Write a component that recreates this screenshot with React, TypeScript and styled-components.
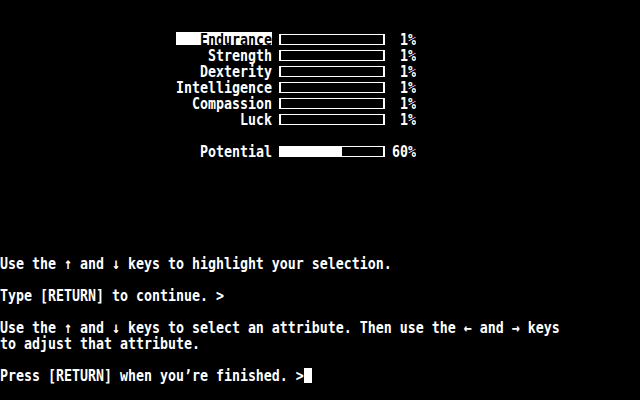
import React from "react";
import styled, { createGlobalStyle } from "styled-components";

const Global = createGlobalStyle`
  html, body {
    margin: 0;
    padding: 0;
    background: #000;
  }
`;

const Screen = styled.div`
  width: 640px;
  height: 400px;
  overflow: hidden;
  background: #000;
  color: #fff;
  font-family: "DejaVu Sans Mono", "Liberation Mono", monospace;
  font-weight: bold;
  font-size: 13.29px;
  line-height: 16px;
  display: flex;
  flex-direction: column;
`;

const Stats = styled.div`
  display: flex;
  flex-direction: column;
  padding: 32px 0 0 176px;
`;

const StatRow = styled.div<{ $spaced?: boolean }>`
  display: grid;
  grid-template-columns: 96px 106px 24px;
  column-gap: 7px;
  height: 16px;
  margin-top: ${(p) => (p.$spaced ? "16px" : "0")};
`;

const Label = styled.div<{ $active?: boolean }>`
  height: 13px;
  text-align: right;
  white-space: pre;
  background: ${(p) => (p.$active ? "#fff" : "transparent")};
  color: ${(p) => (p.$active ? "#000" : "#fff")};
`;

/* the pixel font is taller than it is wide, so glyphs are stretched */
const Glyphs = styled.span`
  display: inline-block;
  line-height: 13px;
  transform: scaleY(1.19);
  transform-origin: 50% 50%;
  white-space: pre;
`;

const Bar = styled.div`
  margin-top: 2px;
  height: 11px;
  box-sizing: border-box;
  border-style: solid;
  border-color: #fff;
  border-width: 1px 2px;
  background: #000;
`;

const BarFill = styled.div`
  height: 100%;
  background: #fff;
`;

const Percent = styled.div`
  text-align: right;
  white-space: pre;
`;

const Messages = styled.div`
  margin-top: 96px;
  display: flex;
  flex-direction: column;
`;

const Para = styled.div`
  margin-bottom: 16px;
`;

const Line = styled.div`
  height: 16px;
  white-space: pre;
`;

const Cursor = styled.span`
  display: inline-block;
  width: 8px;
  height: 15px;
  background: #fff;
  vertical-align: -3px;
`;

type Stat = { name: string; value: number };

const attributes: Stat[] = [
  { name: "Endurance", value: 1 },
  { name: "Strength", value: 1 },
  { name: "Dexterity", value: 1 },
  { name: "Intelligence", value: 1 },
  { name: "Compassion", value: 1 },
  { name: "Luck", value: 1 },
];

const selected = 0;
const potential = 60;

export default function App() {
  return (
    <Screen>
      <Global />
      <Stats>
        {attributes.map((a, i) => (
          <StatRow key={a.name}>
            <Label $active={i === selected}>
              <Glyphs>{a.name}</Glyphs>
            </Label>
            <Bar>
              <BarFill style={{ width: `${a.value === 1 ? 0 : a.value}%` }} />
            </Bar>
            <Percent>
              <Glyphs>{a.value}%</Glyphs>
            </Percent>
          </StatRow>
        ))}
        <StatRow $spaced>
          <Label>
            <Glyphs>Potential</Glyphs>
          </Label>
          <Bar>
            <BarFill style={{ width: `${potential}%` }} />
          </Bar>
          <Percent>
            <Glyphs>{potential}%</Glyphs>
          </Percent>
        </StatRow>
      </Stats>
      <Messages>
        <Para>
          <Line>
            <Glyphs>Use the ↑ and ↓ keys to highlight your selection.</Glyphs>
          </Line>
        </Para>
        <Para>
          <Line>
            <Glyphs>Type [RETURN] to continue. &gt;</Glyphs>
          </Line>
        </Para>
        <Para>
          <Line>
            <Glyphs>
              Use the ↑ and ↓ keys to select an attribute. Then use the ← and → keys
            </Glyphs>
          </Line>
          <Line>
            <Glyphs>to adjust that attribute.</Glyphs>
          </Line>
        </Para>
        <Para>
          <Line>
            <Glyphs>Press [RETURN] when you’re finished. &gt;</Glyphs>
            <Cursor />
          </Line>
        </Para>
      </Messages>
    </Screen>
  );
}
